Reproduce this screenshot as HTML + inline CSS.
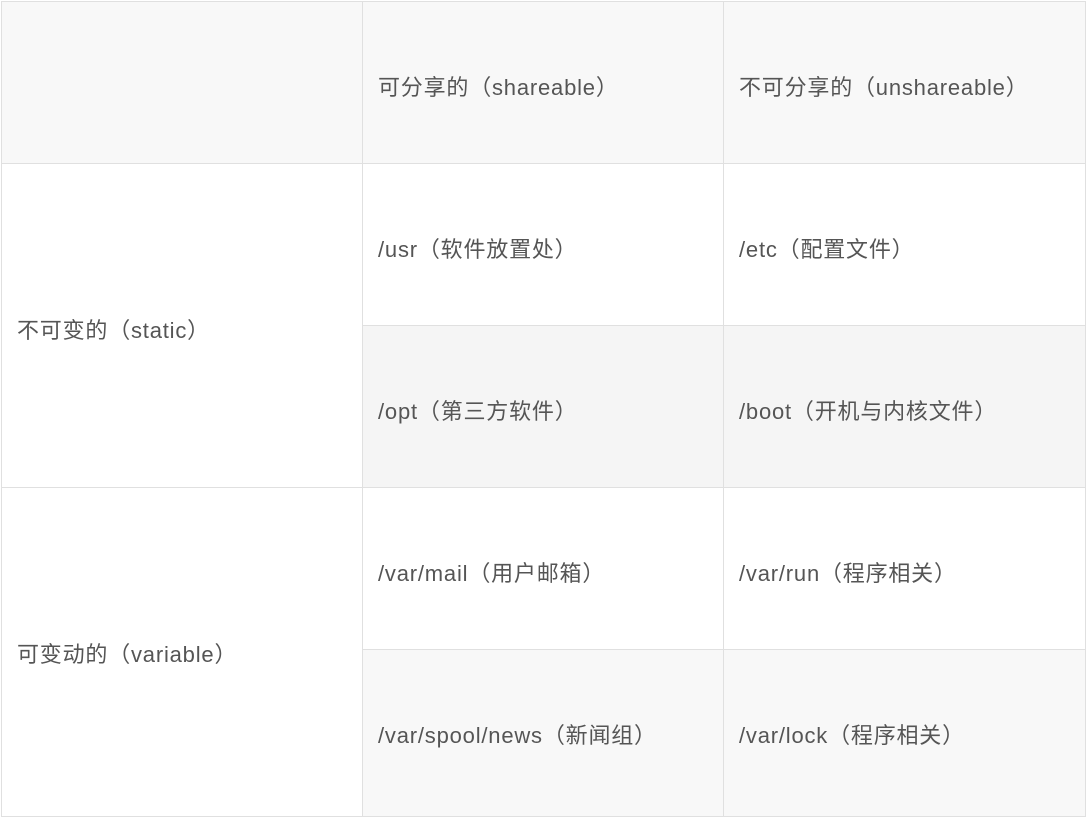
<!DOCTYPE html>
<html><head><meta charset="utf-8"><style>
body{margin:0;width:1086px;height:810px;overflow:hidden;background:#fff;font-family:"Liberation Sans","Noto Sans CJK SC",sans-serif;font-size:22px;color:#555;letter-spacing:0.8px}
.c{position:absolute;box-sizing:border-box;border:1px solid #e0e0e0;display:flex;align-items:center;padding-left:15px;padding-top:7px}
</style></head><body>
<div class="c" style="left:1px;top:1px;width:362px;height:163px;background:#f8f8f8"></div>
<div class="c" style="left:362px;top:1px;width:362px;height:163px;background:#f8f8f8">可分享的（shareable）</div>
<div class="c" style="left:723px;top:1px;width:363px;height:163px;background:#f8f8f8">不可分享的（unshareable）</div>
<div class="c" style="left:1px;top:163px;width:362px;height:325px;background:#fff">不可变的（static）</div>
<div class="c" style="left:362px;top:163px;width:362px;height:163px;background:#fff">/usr（软件放置处）</div>
<div class="c" style="left:723px;top:163px;width:363px;height:163px;background:#fff">/etc（配置文件）</div>
<div class="c" style="left:362px;top:325px;width:362px;height:163px;background:#f5f5f5">/opt（第三方软件）</div>
<div class="c" style="left:723px;top:325px;width:363px;height:163px;background:#f5f5f5">/boot（开机与内核文件）</div>
<div class="c" style="left:1px;top:487px;width:362px;height:330px;background:#fff;padding-bottom:6px">可变动的（variable）</div>
<div class="c" style="left:362px;top:487px;width:362px;height:163px;background:#fff">/var/mail（用户邮箱）</div>
<div class="c" style="left:723px;top:487px;width:363px;height:163px;background:#fff">/var/run（程序相关）</div>
<div class="c" style="left:362px;top:649px;width:362px;height:168px;background:#f8f8f8;padding-bottom:6px">/var/spool/news（新闻组）</div>
<div class="c" style="left:723px;top:649px;width:363px;height:168px;background:#f8f8f8;padding-bottom:6px">/var/lock（程序相关）</div>
</body></html>
